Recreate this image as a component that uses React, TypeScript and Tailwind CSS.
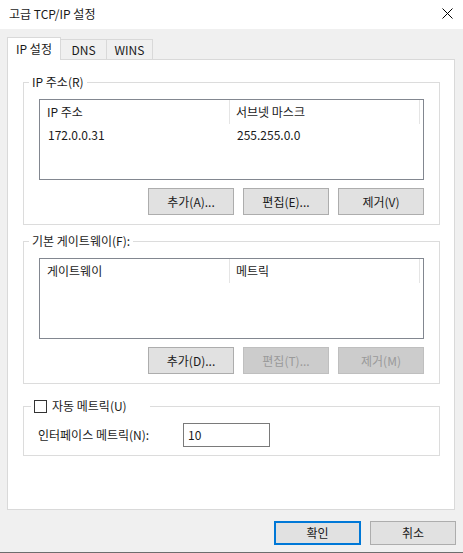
import { useState } from 'react';

const FONT = "font-['Noto_Sans_CJK_KR','Noto_Sans',sans-serif]";

function Btn({ label, disabled, primary, w = 'w-[86px]', h = 'h-[27px]' }: { label: string; disabled?: boolean; primary?: boolean; w?: string; h?: string }) {
    return (
        <button
            disabled={disabled}
            className={`${w} ${h} flex items-center justify-center text-[12px] leading-none ${
                disabled
                    ? 'bg-[#cccccc] border border-[#bfbfbf] text-[#9a9a9a]'
                    : primary
                        ? 'bg-[#e1e1e1] border-2 border-[#0078d7] text-[#1a1a1a]'
                        : 'bg-[#e1e1e1] border border-[#adadad] text-[#1a1a1a]'
            }`}
        >
            {label}
        </button>
    );
}

function ListBox({ cols, rows }: { cols: [string, string]; rows: [string, string][] }) {
    return (
        <div className="h-[81px] border border-[#828790] bg-white">
            <div className="flex h-[24px] items-center">
                <div className="w-[190px] h-full flex items-center pl-[7px] border-r border-[#e5e5e5]">{cols[0]}</div>
                <div className="w-[190px] h-full flex items-center pl-[6px] border-r border-[#e5e5e5]">{cols[1]}</div>
            </div>
            {rows.map((r, i) => (
                <div key={i} className="flex h-[21px] items-center">
                    <div className="w-[190px] pl-[8px]">{r[0]}</div>
                    <div className="w-[190px] pl-[7px]">{r[1]}</div>
                </div>
            ))}
        </div>
    );
}

export default function App() {
    const [tab, setTab] = useState(0);
    const [autoMetric, setAutoMetric] = useState(false);
    const tabs = ['IP 설정', 'DNS', 'WINS'];

    return (
        <div className={`w-[463px] h-[553px] bg-[#f0f0f0] flex flex-col text-[#1a1a1a] text-[12px] ${FONT} border-b border-[#6d6d6d]`}>
            {/* Title bar */}
            <div className="h-[29px] bg-white flex items-center justify-between pl-[9px] pr-[10px] shrink-0">
                <span className="text-[12px] -mt-[1px]">고급 TCP/IP 설정</span>
                <svg width="11" height="11" viewBox="0 0 11 11" className="-mt-[3px]">
                    <path d="M0.5 0.5 L10.5 10.5 M10.5 0.5 L0.5 10.5" stroke="#000" strokeWidth="1" />
                </svg>
            </div>

            <div className="pt-[8px] pl-[7px] pr-[8px]">
                {/* Tabs */}
                <div className="flex items-end h-[22px]">
                    {tabs.map((t, i) =>
                        i === tab ? (
                            <div key={t} onClick={() => setTab(i)}
                                className="relative z-10 w-[54px] h-[23px] -mb-[1px] bg-white border-l border-t border-r border-[#d9d9d9] flex items-start justify-center pt-[2px]">
                                {t}
                            </div>
                        ) : (
                            <div key={t} onClick={() => setTab(i)}
                                className="w-[46px] h-[20px] bg-[#f0f0f0] border-t border-r border-[#d9d9d9] flex items-center justify-center">
                                {t}
                            </div>
                        )
                    )}
                </div>

                {/* Panel */}
                <div className="h-[451px] bg-white border border-[#d9d9d9] pt-[14px] pl-[15px] pr-[14px]">
                    {/* IP addresses */}
                    <fieldset className="border border-[#dcdcdc] pb-[9px]">
                        <legend className="ml-[5px] px-[3px] leading-[16px]">IP 주소(R)</legend>
                        <div className="px-[15px] pt-[9px]">
                            <ListBox cols={['IP 주소', '서브넷 마스크']} rows={[['172.0.0.31', '255.255.0.0']]} />
                            <div className="flex justify-end gap-[9px] mt-[8px]">
                                <Btn label="추가(A)..." />
                                <Btn label="편집(E)..." />
                                <Btn label="제거(V)" />
                            </div>
                        </div>
                    </fieldset>

                    {/* Gateways */}
                    <fieldset className="border border-[#dcdcdc] pb-[9px] mt-[8px]">
                        <legend className="ml-[5px] px-[3px] leading-[16px]">기본 게이트웨이(F):</legend>
                        <div className="px-[15px] pt-[9px]">
                            <ListBox cols={['게이트웨이', '메트릭']} rows={[]} />
                            <div className="flex justify-end gap-[9px] mt-[8px]">
                                <Btn label="추가(D)..." />
                                <Btn label="편집(T)..." disabled />
                                <Btn label="제거(M)" disabled />
                            </div>
                        </div>
                    </fieldset>

                    {/* Metric */}
                    <fieldset className="border border-[#dcdcdc] pb-[8px] mt-[14px]">
                        <legend className="ml-[7px] w-[119px] pl-[3px] leading-[16px] flex items-center gap-[5px]">
                            <span onClick={() => setAutoMetric(!autoMetric)}
                                className="w-[13px] h-[13px] border border-[#333333] bg-white flex items-center justify-center shrink-0">
                                {autoMetric && (
                                    <svg width="9" height="9" viewBox="0 0 9 9"><path d="M1 4.5 L3.5 7 L8 1.5" stroke="#000" strokeWidth="1.3" fill="none" /></svg>
                                )}
                            </span>
                            <span>자동 메트릭(U)</span>
                        </legend>
                        <div className="flex items-center pl-[14px] pt-[9px]">
                            <span className="w-[145px]">인터페이스 메트릭(N):</span>
                            <div className="w-[87px] h-[24px] border border-[#7a7a7a] bg-white flex items-center pl-[4px]">10</div>
                        </div>
                    </fieldset>
                </div>
            </div>

            {/* Dialog buttons */}
            <div className="flex justify-end gap-[9px] pr-[7px] mt-[11px]">
                <Btn label="확인" primary w="w-[87px]" h="h-[24px]" />
                <Btn label="취소" h="h-[24px]" />
            </div>
        </div>
    );
}
